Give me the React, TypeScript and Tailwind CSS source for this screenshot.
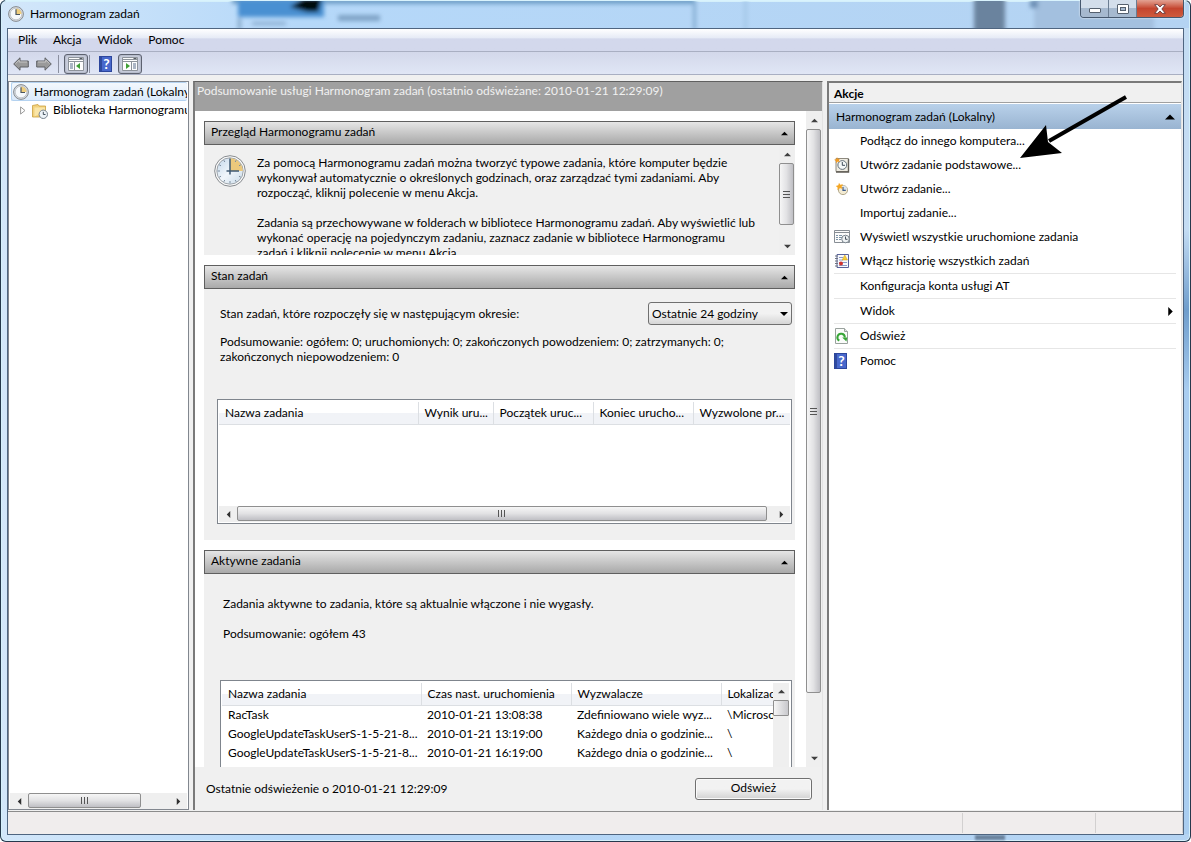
import { useState } from 'react';
import type { ReactNode } from 'react';

interface Column {
  label: string;
  width: string;
}

interface Action {
  label: string;
  icon?: ReactNode;
  submenu?: boolean;
  separated?: boolean;
}

const statusColumns: Column[] = [
  { label: 'Nazwa zadania', width: 'w-[199px]' },
  { label: 'Wynik uru...', width: 'w-[75px]' },
  { label: 'Początek uruc...', width: 'w-[100px]' },
  { label: 'Koniec urucho...', width: 'w-[100px]' },
  { label: 'Wyzwolone pr...', width: 'w-[100px]' },
];

const activeColumns: Column[] = [
  { label: 'Nazwa zadania', width: 'w-[199px]' },
  { label: 'Czas nast. uruchomienia', width: 'w-[150px]' },
  { label: 'Wyzwalacze', width: 'w-[150px]' },
  { label: 'Lokalizacja', width: 'w-[100px]' },
];

const activeTasks = [
  ['RacTask', '2010-01-21 13:08:38', 'Zdefiniowano wiele wyz...', '\\Microsoft'],
  ['GoogleUpdateTaskUserS-1-5-21-8...', '2010-01-21 13:19:00', 'Każdego dnia o godzinie...', '\\'],
  ['GoogleUpdateTaskUserS-1-5-21-8...', '2010-01-21 16:19:00', 'Każdego dnia o godzinie...', '\\'],
];

const menus = ['Plik', 'Akcja', 'Widok', 'Pomoc'];

function ClockIcon({ className }: { className: string }) {
  return (
    <svg viewBox="0 0 16 16" className={className} aria-hidden="true">
      <circle cx="8" cy="8" r="7.4" fill="#d9dde1" stroke="#85898e" />
      <circle cx="8" cy="8" r="5.8" fill="#f6f9fc" stroke="#b3b8be" strokeWidth="0.7" />
      <path d="M8 8V2.4A5.6 5.6 0 0 1 13.6 8Z" fill="#efce7e" />
      <path d="M8 3.2V8.5H12" fill="none" stroke="#4a5560" strokeWidth="1.2" />
    </svg>
  );
}

function BigClockIcon() {
  return (
    <svg viewBox="0 0 32 32" className="size-8 shrink-0" aria-hidden="true">
      <defs>
        <linearGradient id="face" x1="0" y1="0" x2="1" y2="1">
          <stop offset="0" stopColor="#c3d7ea" />
          <stop offset="0.5" stopColor="#f0f6fb" />
          <stop offset="1" stopColor="#c9dae8" />
        </linearGradient>
      </defs>
      <circle cx="16" cy="16" r="15.3" fill="#fbfbfb" stroke="#85898d" />
      <circle cx="16" cy="16" r="13.2" fill="url(#face)" stroke="#8d9297" strokeWidth="0.8" />
      <path d="M16 16V3.2A12.8 12.8 0 0 1 28.8 16Z" fill="#ecc97c" />
      <g stroke="#7f8fa0" strokeWidth="1">
        <path d="M16 26v2.5M3.5 16H6M9.8 5.2l1 1.8M5.2 9.8l1.8 1M5.2 22.2l1.8-1M9.8 26.8l1-1.8M22.2 26.8l-1-1.8M26.8 22.2l-1.8-1M22.2 5.2l-1 1.8M26.8 9.8l-1.8 1" />
      </g>
      <path d="M16 3.5V19.5M12.5 16H25" fill="none" stroke="#3f5a73" strokeWidth="1.5" />
    </svg>
  );
}

function FolderClockIcon() {
  return (
    <svg viewBox="0 0 16 16" className="size-4 shrink-0" aria-hidden="true">
      <path d="M.5 2.5 6 1.5l1 1.5h6.5v11H.5Z" fill="#f3d27c" stroke="#c99f3d" strokeWidth="0.8" />
      <path d="M2.5 4.5H13V8L2.5 13.5Z" fill="#fae6a8" />
      <circle cx="11.3" cy="11.3" r="4.2" fill="#edf3f8" stroke="#76828d" />
      <path d="M11.3 8.8v2.7h2.2" fill="none" stroke="#44505c" />
    </svg>
  );
}

function HelpIcon() {
  return (
    <svg viewBox="0 0 14 16" className="h-4 w-[14px]" aria-hidden="true">
      <rect x="0.5" y="0.5" width="12" height="15" fill="#4868cc" stroke="#2c469c" />
      <path d="M2 1v14" stroke="#27408f" strokeWidth="1.5" />
      <text x="7.600" y="13" textAnchor="middle" fontSize="14" fontWeight="700" fill="#fff">?</text>
    </svg>
  );
}

function ArrowIcon({ flip }: { flip?: boolean }) {
  return (
    <svg viewBox="0 0 16 14" className={flip ? 'h-[14px] w-4 -scale-x-100' : 'h-[14px] w-4'} aria-hidden="true">
      <path d="M.7 7 7 .8V4h8.3v6H7v3.2Z" fill="#9a9a9a" stroke="#5e6064" />
      <path d="M2.5 6.6 6.2 3v2H14" fill="none" stroke="#c6c6c6" />
    </svg>
  );
}

function PaneIcon({ right }: { right?: boolean }) {
  return (
    <svg viewBox="0 0 16 14" className="h-[14px] w-4" aria-hidden="true">
      <path d="M.5.5h15v13H.5Z" fill="#fdfdfd" stroke="#8d939b" />
      <path d="M1 2.5h14M1 4.5h14" stroke="#8d939b" />
      <path d="M11.5 1.5h3" stroke="#555b63" />
      {right ? (
        <>
          <path d="M9.5 5v8.5" stroke="#8d939b" />
          <path d="M11 7h3M11 9h3M11 11h3" stroke="#5b6f8c" />
          <path d="M4 6v6l4-3Z" fill="#3f9f35" />
        </>
      ) : (
        <>
          <path d="M6.5 5v8.5" stroke="#8d939b" />
          <path d="M2 7h3M2 9h3M2 11h3" stroke="#5b6f8c" />
          <path d="M12 6v6L8 9Z" fill="#3f9f35" />
        </>
      )}
    </svg>
  );
}

function BasicTaskIcon() {
  return (
    <svg viewBox="0 0 16 16" className="size-4" aria-hidden="true">
      <path d="M2 1.5h12.500v13H2Z" fill="#efece2" stroke="#8d897f" />
      <path d="M14.5 2v13H2" fill="none" stroke="#5f5b54" strokeWidth="1.4" />
      <circle cx="8.3" cy="8" r="4.4" fill="#f5f8f8" stroke="#64707a" />
      <path d="M8.3 5v3.3h2.7" fill="none" stroke="#3c4a58" />
      <path d="m3 0 .9 1.900 2.300-.4L4.900 3.200 6 5.200l-2.200-.7L1.900 6.300 2 4 0 2.800l2.300-.6Z" fill="#f19a22" />
    </svg>
  );
}

function NewTaskIcon() {
  return (
    <svg viewBox="0 0 16 16" className="size-4" aria-hidden="true">
      <circle cx="9" cy="9" r="4.6" fill="#f2ead2" stroke="#b4a98c" />
      <path d="M9 9V4.6A4.4 4.4 0 0 1 13.4 9Z" fill="#d9e3ee" />
      <path d="M9 6v3.3h2.800" fill="none" stroke="#3c5a88" strokeWidth="1.2" />
      <path d="m5 1.800 1.200 1.900 2.800-.5-1.500 2.200 1.200 2.500-2.700-.8L3.400 9.200l.2-2.800L1.800 5l2.500-.7Z" fill="#f5a623" />
    </svg>
  );
}

function RunningIcon() {
  return (
    <svg viewBox="0 0 16 14" className="h-[14px] w-4" aria-hidden="true">
      <path d="M.5.5h15v12H.5Z" fill="#fbfbfb" stroke="#878d94" />
      <path d="M1 2.5h14" stroke="#878d94" />
      <path d="M2 5.5h2M5 5.5h3M2 7.5h2M5 7.5h3M2 9.5h2M5 9.5h2" stroke="#7c93a6" />
      <circle cx="11.5" cy="9" r="3.8" fill="#eef2f4" stroke="#7b858e" />
      <path d="M11.5 6.5v2.8h2" fill="none" stroke="#46525e" />
    </svg>
  );
}

function HistoryIcon() {
  return (
    <svg viewBox="0 0 14 16" className="ml-px h-4 w-[14px]" aria-hidden="true">
      <path d="M2 1.5h11.5v13H2Z" fill="#f8f9fd" stroke="#59639b" />
      <path d="M0 3h3M0 5.5h3M0 8h3M0 10.5h3M0 13h3" stroke="#6d7480" />
      <path d="M4 4.5h4M4 7h4M4 9.5h8M4 12.5h8" stroke="#8b9ac4" />
      <path d="m9.8 2 2.7 5H7.2Z" fill="#f6cf3a" stroke="#cf9f1d" strokeWidth="0.5" />
      <circle cx="6" cy="10.6" r="2" fill="#d2322d" />
    </svg>
  );
}

function RefreshIcon() {
  return (
    <svg viewBox="0 0 14 16" className="ml-px h-4 w-[14px]" aria-hidden="true">
      <path d="M.5.5h9l3 3v12H.5Z" fill="#fafcfa" stroke="#9aa29e" />
      <path d="M9.500.5v3h3" fill="#dfe5e1" stroke="#9aa29e" />
      <path d="M4.300 12.600A3.700 3.700 0 1 1 9.800 9.500" fill="none" stroke="#37a537" strokeWidth="2" />
      <path d="M7.200 9.600h5.200l-1 3.800Z" fill="#37a537" />
    </svg>
  );
}

const actions: Action[] = [
  { label: 'Podłącz do innego komputera...' },
  { label: 'Utwórz zadanie podstawowe...', icon: <BasicTaskIcon /> },
  { label: 'Utwórz zadanie...', icon: <NewTaskIcon /> },
  { label: 'Importuj zadanie...' },
  { label: 'Wyświetl wszystkie uruchomione zadania', icon: <RunningIcon /> },
  { label: 'Włącz historię wszystkich zadań', icon: <HistoryIcon /> },
  { label: 'Konfiguracja konta usługi AT', separated: true },
  { label: 'Widok', submenu: true, separated: true },
  { label: 'Odśwież', icon: <RefreshIcon />, separated: true },
  { label: 'Pomoc', icon: <HelpIcon />, separated: true },
];

// dir is the way the triangle points
function Triangle({ dir, className }: { dir: 'up' | 'down' | 'left' | 'right'; className?: string }) {
  const paths = {
    up: 'M0 6 4 2l4 4Z',
    down: 'M0 2h8L4 6Z',
    left: 'M6 0v8L2 4Z',
    right: 'M2 0v8l4-4Z',
  };
  return (
    <svg viewBox="0 0 8 8" className={className || 'size-[7px]'} aria-hidden="true">
      <path d={paths[dir]} fill="currentColor" />
    </svg>
  );
}

function VerticalBar({ thumb }: { thumb: string }) {
  return (
    <div className="flex w-4 shrink-0 flex-col bg-[#efefef] text-[#404040]">
      <button aria-label="W górę" className="flex h-[18px] shrink-0 items-center justify-center">
        <Triangle dir="up" />
      </button>
      <div className="min-h-0 flex-1">
        <div className={`flex w-[15px] flex-col items-center justify-center gap-px rounded-[2px] border border-[#8f8f8f] bg-linear-to-r from-[#f6f6f6] via-[#e2e2e4] to-[#bfbfc4] ${thumb}`}>
          <span className="h-px w-[7px] bg-[#555]" />
          <span className="my-px h-px w-[7px] bg-[#555]" />
          <span className="h-px w-[7px] bg-[#555]" />
        </div>
      </div>
      <button aria-label="W dół" className="flex h-[18px] shrink-0 items-center justify-center">
        <Triangle dir="down" />
      </button>
    </div>
  );
}

function HorizontalBar({ thumb }: { thumb: string }) {
  return (
    <div className="flex h-4 shrink-0 bg-[#efefef] text-[#303030]">
      <button aria-label="W lewo" className="flex w-[18px] shrink-0 items-center justify-center">
        <Triangle dir="left" />
      </button>
      <div className="flex min-w-0 flex-1">
        <div className={`flex h-[15px] items-center justify-center gap-[2px] rounded-[2px] border border-[#8f8f8f] bg-linear-to-b from-[#f6f6f6] via-[#e2e2e4] to-[#bfbfc4] ${thumb}`}>
          <span className="h-[7px] w-px bg-[#555]" />
          <span className="h-[7px] w-px bg-[#555]" />
          <span className="h-[7px] w-px bg-[#555]" />
        </div>
      </div>
      <button aria-label="W prawo" className="flex w-[18px] shrink-0 items-center justify-center">
        <Triangle dir="right" />
      </button>
    </div>
  );
}

function SectionHeader({ title }: { title: string }) {
  return (
    <button className="flex h-6 w-full shrink-0 items-center justify-between border border-[#5f5f5f] bg-linear-to-b from-[#e6e6e6] to-[#a9a9a9] px-[6px]">
      <h2 className="pb-[3px]">{title}</h2>
      <Triangle dir="up" />
    </button>
  );
}

function TaskTable({ columns, rows }: { columns: Column[]; rows: string[][] }) {
  return (
    <table className="w-full table-fixed">
      <thead>
        <tr className="h-[22px] bg-linear-to-b from-white from-50% to-[#f1f3f7] to-50%">
          {columns.map((col) => (
            <th key={col.label} className={`overflow-hidden border-r border-b border-[#dcdfe3] p-0 pl-[6px] text-left font-normal whitespace-nowrap last:border-r-0 ${col.width}`}>
              {col.label}
            </th>
          ))}
        </tr>
      </thead>
      <tbody>
        {rows.map((row, i) => (
          <tr key={i} className="h-[19px]">
            {row.map((cell, j) => (
              <td key={j} className="overflow-hidden p-0 pl-[6px] whitespace-nowrap">{cell}</td>
            ))}
          </tr>
        ))}
      </tbody>
    </table>
  );
}

// Blurred desktop seen through the glass title bar and the frame
function GlassBackdrop() {
  return (
    <>
      <svg className="absolute inset-x-0 top-0 h-7 w-full" aria-hidden="true">
        <defs>
          <filter id="soft" x="-20%" y="-50%" width="140%" height="200%">
            <feGaussianBlur stdDeviation="2" />
          </filter>
        </defs>
        <g filter="url(#soft)">
          <rect x="232" y="-4" width="462" height="8" fill="#6f9fc8" />
          <rect x="238" y="0" width="86" height="17" fill="#4a90d2" />
          <rect x="238" y="18" width="3" height="12" fill="#7fa3c4" />
          <rect x="252" y="22" width="34" height="3" fill="#86a9cc" />
          <path d="M290 7 304-2h18l-4 14h-10Z" fill="#050a10" />
          <rect x="338" y="15" width="42" height="6" fill="#7fa3c6" />
          <rect x="693" y="0" width="3" height="30" fill="#82abd0" />
          <rect x="744" y="0" width="3" height="30" fill="#a3c6e6" />
          <rect x="974" y="-4" width="31" height="40" fill="#6b839e" />
          <rect x="1034" y="-4" width="120" height="40" fill="#a3c0df" />
          <rect x="1030" y="0" width="8" height="8" fill="#6d90b5" />
        </g>
        <path d="M5 .5H5000" stroke="#d9f3fd" />
      </svg>
      <div className="absolute top-7 right-[2px] bottom-2 w-[5px] bg-linear-to-b from-[#c4dcf3] from-25% via-[#6f9dcc] via-35% to-[#a9cdf0] to-45%" />
      <div className="absolute right-[186px] bottom-[2px] h-[5px] w-[30px] bg-[#6b839e] blur-[1px]" />
    </>
  );
}

function TitleBar() {
  return (
    <header className="relative flex h-7 shrink-0 items-center gap-[6px] pl-px">
      <ClockIcon className="size-4" />
      <h1 className="pb-[2px]">Harmonogram zadań</h1>
      <div className="ml-auto flex h-[18px] self-start overflow-hidden rounded-b-[4px] border border-t-0 border-[#46586e] shadow-[0_0_2px_#fff]">
        <button aria-label="Minimalizuj" className="flex w-7 items-end justify-center border-r border-[#6b7d92] bg-linear-to-b from-[#d3deeb] from-50% to-[#a6b9cf] to-50% pb-1">
          <span className="h-[5px] w-3 rounded-[1px] border border-[#55606e] bg-white" />
        </button>
        <button aria-label="Maksymalizuj" className="flex w-7 items-center justify-center border-r border-[#6b7d92] bg-linear-to-b from-[#d3deeb] from-50% to-[#a6b9cf] to-50%">
          <span className="flex h-[10px] w-3 items-center justify-center rounded-[1px] border border-[#55606e] bg-white">
            <span className="h-1 w-[6px] border border-[#55606e] bg-[#a6b9cf]" />
          </span>
        </button>
        <button aria-label="Zamknij" className="flex w-[46px] items-center justify-center bg-linear-to-b from-[#e2a293] via-[#c4452f] to-[#cf5b3d]">
          <svg viewBox="0 0 12 10" className="h-[10px] w-3" aria-hidden="true">
            <path d="M.7.7h3L6 3 8.300.7h3L7.800 5l3.500 4.300h-3L6 7 3.700 9.300h-3L4.200 5Z" fill="#fff" stroke="#5a3034" strokeWidth="0.8" />
          </svg>
        </button>
      </div>
    </header>
  );
}

function Toolbar() {
  const pressed = 'flex h-5 w-6 items-center justify-center rounded-[3px] border border-[#5d6270] bg-[#c9cedd] shadow-[inset_0_0_2px_#8a90a0]';
  return (
    <div className="flex h-[23px] shrink-0 items-center border-b border-[#a9afc2] bg-linear-to-b from-[#d3d8ea] to-[#e0e6f5] pt-[2px] pl-[5px]">
      <button aria-label="Wstecz"><ArrowIcon /></button>
      <button aria-label="Dalej" className="ml-[7px]"><ArrowIcon flip /></button>
      <span className="ml-[6px] h-[18px] w-px bg-[#8b90a0]" />
      <button aria-label="Drzewo konsoli" className={`ml-[5px] ${pressed}`}><PaneIcon /></button>
      <span className="ml-px h-[18px] w-px bg-[#8b90a0]" />
      <button aria-label="Pomoc" className="ml-[9px]"><HelpIcon /></button>
      <button aria-label="Okienko akcji" className={`ml-[5px] ${pressed}`}><PaneIcon right /></button>
    </div>
  );
}

function TreePane() {
  return (
    <nav className="flex w-[181px] shrink-0 flex-col border border-[#82878f] bg-white px-px">
      <ul className="min-h-0 flex-1 overflow-hidden whitespace-nowrap">
        <li className="ml-px flex h-[19px] items-center gap-[5px] rounded-[2px] border border-r-0 border-[#b4d2f0] bg-linear-to-b from-[#f3f8fd] to-[#dbeafb] pl-px">
          <ClockIcon className="size-4 shrink-0" />
          <a href="#lokalny">Harmonogram zadań (Lokalny)</a>
        </li>
        <li className="flex h-[19px] items-center pl-[10px]">
          <svg viewBox="0 0 6 9" className="mr-[6px] h-[9px] w-[6px] shrink-0" aria-hidden="true">
            <path d="M.6.9v7.200L5 4.500Z" fill="#fff" stroke="#9a9a9a" />
          </svg>
          <FolderClockIcon />
          <a href="#biblioteka" className="ml-[5px] pb-[2px]">Biblioteka Harmonogramu zadań</a>
        </li>
      </ul>
      <HorizontalBar thumb="w-[113px]" />
    </nav>
  );
}

function SummaryPane() {
  const [period, setPeriod] = useState('24h');

  return (
    <main className="flex min-w-0 flex-1 flex-col border-t border-r border-l-2 border-t-[#606060] border-r-[#e3e3e3] border-l-[#7a7a7a] bg-[#f0f0f0]">
      <div className="h-[29px] shrink-0 overflow-hidden bg-[#a0a0a0] pt-px pl-[2px] whitespace-nowrap text-[#f0f0f0]">
        Podsumowanie usługi Harmonogram zadań (ostatnio odświeżane: 2010-01-21 12:29:09)
      </div>

      <div className="flex min-h-0 flex-1 bg-white">
        <div className="flex min-w-0 flex-1 flex-col gap-[10px] overflow-hidden pt-[10px] pr-[11px] pl-[9px]">
          <section className="flex h-[134px] shrink-0 flex-col bg-[#f0f0f0]">
            <SectionHeader title="Przegląd Harmonogramu zadań" />
            <div className="flex min-h-0 flex-1">
              <div className="flex min-w-0 flex-1 gap-[11px] overflow-hidden pt-[10px] pl-[10px]">
                <BigClockIcon />
                <div className="min-w-0">
                  <p>
                    Za pomocą Harmonogramu zadań można tworzyć typowe zadania, które komputer będzie<br />
                    wykonywał automatycznie o określonych godzinach, oraz zarządzać tymi zadaniami. Aby<br />
                    rozpocząć, kliknij polecenie w menu Akcja.
                  </p>
                  <p className="mt-[15px]">
                    Zadania są przechowywane w folderach w bibliotece Harmonogramu zadań. Aby wyświetlić lub<br />
                    wykonać operację na pojedynczym zadaniu, zaznacz zadanie w bibliotece Harmonogramu<br />
                    zadań i kliknij polecenie w menu Akcja.
                  </p>
                </div>
              </div>
              <VerticalBar thumb="h-[62px]" />
            </div>
          </section>

          <section className="shrink-0 bg-[#f0f0f0]">
            <SectionHeader title="Stan zadań" />
            <div className="px-[3px] pt-[13px] pb-4 pl-[13px]">
              <div className="flex items-center justify-between pl-[3px]">
                <label htmlFor="period">Stan zadań, które rozpoczęły się w następującym okresie:</label>
                <div className="relative">
                  <select
                    id="period"
                    value={period}
                    onChange={(e) => setPeriod(e.target.value)}
                    className="h-[23px] w-36 appearance-none rounded-[3px] border border-[#707070] bg-linear-to-b from-[#f2f2f2] from-50% to-[#d6d6d6] pl-[3px]"
                  >
                    <option value="24h">Ostatnie 24 godziny</option>
                    <option value="7d">Ostatnie 7 dni</option>
                  </select>
                  <Triangle dir="down" className="pointer-events-none absolute top-2 right-1 size-2" />
                </div>
              </div>
              <p className="mt-[9px] pl-[3px]">
                Podsumowanie: ogółem: 0; uruchomionych: 0; zakończonych powodzeniem: 0; zatrzymanych: 0;<br />
                zakończonych niepowodzeniem: 0
              </p>
              <div className="mt-[35px] flex h-[125px] flex-col border border-[#7f858d] bg-white px-px pt-[2px] pb-px">
                <div className="min-h-0 flex-1 overflow-hidden">
                  <TaskTable columns={statusColumns} rows={[]} />
                </div>
                <HorizontalBar thumb="w-[99%]" />
              </div>
            </div>
          </section>

          <section className="flex min-h-0 flex-1 flex-col overflow-hidden bg-[#f0f0f0]">
            <SectionHeader title="Aktywne zadania" />
            <div className="flex min-h-0 flex-1 flex-col pt-[22px] pr-[3px] pl-4">
              <p className="shrink-0 pl-[3px]">Zadania aktywne to zadania, które są aktualnie włączone i nie wygasły.</p>
              <p className="mt-[15px] shrink-0 pl-[3px]">Podsumowanie: ogółem 43</p>
              <div className="mt-[39px] flex min-h-0 flex-1 border border-b-0 border-[#7f858d] bg-white pt-[2px] pr-[2px] pl-px">
                <div className="min-w-0 flex-1 overflow-hidden">
                  <TaskTable columns={activeColumns} rows={activeTasks} />
                </div>
                <div className="flex w-4 shrink-0 flex-col items-center bg-[#efefef] text-[#404040]">
                  <button aria-label="W górę" className="flex h-[17px] items-center justify-center">
                    <Triangle dir="up" />
                  </button>
                  <span className="h-4 w-full rounded-[1px] border border-[#8f8f8f] bg-linear-to-r from-[#f6f6f6] to-[#c8c8cc]" />
                </div>
              </div>
            </div>
          </section>
        </div>
        <VerticalBar thumb="h-[91%]" />
      </div>

      <footer className="flex h-[43px] shrink-0 items-center justify-between pr-[10px] pl-[11px]">
        <span>Ostatnie odświeżenie o 2010-01-21 12:29:09</span>
        <button className="h-[22px] w-[117px] rounded-[3px] border border-[#707070] bg-linear-to-b from-[#f2f2f2] from-50% to-[#d2d2d2] pb-[2px] shadow-[inset_0_0_0_1px_#fafafa]">
          Odśwież
        </button>
      </footer>
    </main>
  );
}

function ActionsPane() {
  return (
    <aside className="relative w-[355px] shrink-0 border-t-2 border-r border-l-2 border-t-[#7a7a7a] border-r-[#e3e3e3] border-l-[#7a7a7a] bg-white">
      <h2 className="h-5 border-b border-[#a0a0a0] bg-[#f0f0f0] pt-[3px] pl-[5px] font-bold">Akcje</h2>
      <button className="mt-px flex h-[25px] w-full items-center justify-between bg-linear-to-b from-[#b9d1ea] to-[#99b4d1] pr-[6px] pl-[7px]">
        <span>Harmonogram zadań (Lokalny)</span>
        <Triangle dir="up" className="size-[10px]" />
      </button>
      <ul className="mr-[5px] ml-[5px]">
        {actions.map((action) => (
          <li key={action.label} className={action.separated ? 'border-t border-[#e6e6e6]' : ''}>
            <button className="flex h-6 w-full items-center text-left">
              <span className="flex w-[26px] shrink-0 items-center">{action.icon}</span>
              <span className="flex-1 pb-[2px]">{action.label}</span>
              {action.submenu && <Triangle dir="right" className="mr-px size-[9px]" />}
            </button>
          </li>
        ))}
      </ul>

      {/* hand-drawn pointer to the basic task entry */}
      <svg viewBox="0 0 110 66" className="pointer-events-none absolute top-[12px] left-[190px] h-[66px] w-[110px]" aria-hidden="true">
        <path d="M107 2 30 46" stroke="#000" strokeWidth="4" />
        <path d="M1 63 27 30l2 17 14 11Z" fill="#000" />
      </svg>
    </aside>
  );
}

export default function App() {
  return (
    <div className="relative flex h-screen flex-col overflow-hidden rounded-[6px] bg-linear-to-r from-[#d3e7fa] via-[#b5d8f9] via-25% to-[#b4d3f2] px-[7px] pb-[7px] font-['Lato','Open_Sans',sans-serif] text-[12px] leading-[15px] text-black shadow-[inset_0_0_0_1px_#26384c,inset_0_0_0_2px_#d5f0fb]">
      <GlassBackdrop />
      <TitleBar />
      <div className="relative flex min-h-0 flex-1 flex-col border border-[#4f6580] bg-[#f0f0f0]">
        <div role="menubar" className="flex h-[23px] shrink-0 items-center gap-4 border-b border-[#a9afc2] bg-linear-to-b from-white via-[#e6ebf6] via-40% to-[#d3d8ec] to-45% pb-[2px] pl-[10px]">
          {menus.map((m) => (
            <button key={m} role="menuitem">{m}</button>
          ))}
        </div>
        <Toolbar />
        <div className="flex min-h-0 flex-1 gap-1 pt-[6px] pr-px pb-px">
          <TreePane />
          <SummaryPane />
          <ActionsPane />
        </div>
        <div className="flex h-[23px] shrink-0 justify-end border-t border-[#8c8c8c] bg-[#f0eded] py-px">
          <span className="w-[133px] border-l border-[#d2d0d0]" />
          <span className="w-[88px] border-x border-[#d2d0d0]" />
        </div>
      </div>
    </div>
  );
}
